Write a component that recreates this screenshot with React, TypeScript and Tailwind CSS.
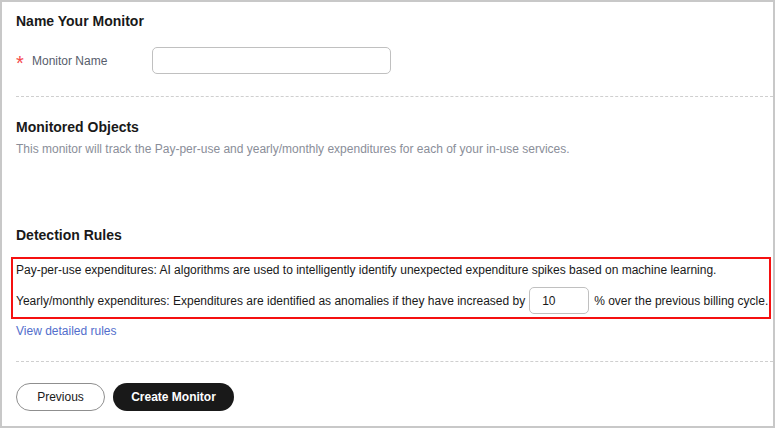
export default function App() {
  return (
    <div className="w-[775px] h-[428px] overflow-hidden border-2 border-[#c8c8c8] bg-white font-['Liberation_Sans',Arial,sans-serif] text-[#191919]">
      <div className="pl-[14px] pt-[11px]">
        {/* name */}
        <h2 className="text-[14px] font-bold leading-[16px]">Name Your Monitor</h2>
        <div className="mt-[18px] flex items-center">
          <label className="flex w-[136px] items-center text-[12px] text-[#575d6c]">
            <span className="mt-[5px] w-[16px] text-[20px] leading-[12px] text-[#f5484b]">*</span>
            Monitor Name
          </label>
          <input className="h-[27px] w-[239px] rounded-[5px] border border-[#c0c0c0] px-[10px] text-[12px] outline-none" />
        </div>
        <div className="mt-[22px] border-t border-dashed border-[#cfcfcf]" />

        {/* objects */}
        <h2 className="mt-[22px] text-[14px] font-bold leading-[16px]">Monitored Objects</h2>
        <p className="mt-[6px] text-[12px] leading-[16px] text-[#8a8e99]">
          This monitor will track the Pay-per-use and yearly/monthly expenditures for each of your in-use services.
        </p>

        {/* rules */}
        <h2 className="mt-[70px] text-[14px] font-bold leading-[16px]">Detection Rules</h2>
        <div className="mt-[14px] ml-[-5px] mr-[2px] border-2 border-[#f51010] pl-[3px] pt-[3px] pb-[3px] text-[12px] leading-[16px]">
          <p>
            Pay-per-use expenditures: AI algorithms are used to intelligently identify unexpected expenditure spikes based on machine learning.
          </p>
          <div className="mt-[9px] flex items-center">
            <span>Yearly/monthly expenditures: Expenditures are identified as anomalies if they have increased by</span>
            <input
              defaultValue="10"
              className="ml-[4px] mr-[5px] h-[27px] w-[60px] rounded-[5px] border border-[#c0c0c0] pl-[12px] text-[12px] outline-none"
            />
            <span>% over the previous billing cycle.</span>
          </div>
        </div>
        <a className="mt-[4px] block text-[12px] leading-[16px] text-[#526ecc]">View detailed rules</a>
        <div className="mt-[22px] border-t border-dashed border-[#cfcfcf]" />

        {/* actions */}
        <div className="mt-[21px] flex gap-[8px]">
          <button className="h-[28px] w-[89px] rounded-full border border-[#8f8f8f] text-[12px] text-[#191919]">
            Previous
          </button>
          <button className="h-[28px] w-[121px] rounded-full bg-[#191919] text-[12px] font-bold text-white">
            Create Monitor
          </button>
        </div>
      </div>
    </div>
  );
}
